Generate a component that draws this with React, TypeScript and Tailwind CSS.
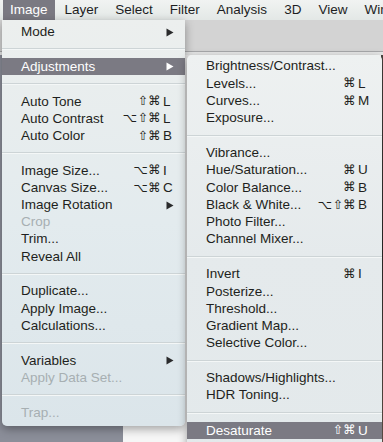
type Row =
  | "sep"
  | { label: string; mods?: string; k?: string; arrow?: boolean; off?: boolean; on?: boolean };

const MAIN: Row[] = [
  { label: "Mode", arrow: true },
  "sep",
  { label: "Adjustments", arrow: true, on: true },
  "sep",
  { label: "Auto Tone", mods: "⇧⌘", k: "L" },
  { label: "Auto Contrast", mods: "⌥⇧⌘", k: "L" },
  { label: "Auto Color", mods: "⇧⌘", k: "B" },
  "sep",
  { label: "Image Size...", mods: "⌥⌘", k: "I" },
  { label: "Canvas Size...", mods: "⌥⌘", k: "C" },
  { label: "Image Rotation", arrow: true },
  { label: "Crop", off: true },
  { label: "Trim..." },
  { label: "Reveal All" },
  "sep",
  { label: "Duplicate..." },
  { label: "Apply Image..." },
  { label: "Calculations..." },
  "sep",
  { label: "Variables", arrow: true },
  { label: "Apply Data Set...", off: true },
  "sep",
  { label: "Trap...", off: true },
];

const ADJUST: Row[] = [
  { label: "Brightness/Contrast..." },
  { label: "Levels...", mods: "⌘", k: "L" },
  { label: "Curves...", mods: "⌘", k: "M" },
  { label: "Exposure..." },
  "sep",
  { label: "Vibrance..." },
  { label: "Hue/Saturation...", mods: "⌘", k: "U" },
  { label: "Color Balance...", mods: "⌘", k: "B" },
  { label: "Black & White...", mods: "⌥⇧⌘", k: "B" },
  { label: "Photo Filter..." },
  { label: "Channel Mixer..." },
  "sep",
  { label: "Invert", mods: "⌘", k: "I" },
  { label: "Posterize..." },
  { label: "Threshold..." },
  { label: "Gradient Map..." },
  { label: "Selective Color..." },
  "sep",
  { label: "Shadows/Highlights..." },
  { label: "HDR Toning..." },
  "sep",
  { label: "Desaturate", mods: "⇧⌘", k: "U", on: true },
];

const BAR = ["Image", "Layer", "Select", "Filter", "Analysis", "3D", "View", "Window"];

function MenuRows({ rows, pr, sep }: { rows: Row[]; pr: string; sep: string }) {
  return (
    <>
      {rows.map((r, i) =>
        r === "sep" ? (
          <div key={i} className={"flex flex-col justify-center " + sep}>
            <div className="h-px bg-[#cdd4d6]" />
            <div className="h-px bg-[#f4f7f7]" />
          </div>
        ) : (
          <div
            key={i}
            className={
              "flex h-[17.2px] items-center pl-[19px] " +
              pr +
              (r.on ? " bg-[#7b7a83] text-white" : r.off ? " text-[#a7afb2]" : " text-[#1e1f20]")
            }
          >
            <span className="flex-1 whitespace-nowrap">{r.label}</span>
            {r.k && (
              <span className="flex items-center">
                <span className="font-['DejaVu_Sans'] text-[12.5px] tracking-[0.3px]">{r.mods}</span>
                <span className="ml-[2px] w-[11px]">{r.k}</span>
              </span>
            )}
            {r.arrow && (
              <svg width="8" height="9" viewBox="0 0 8 9">
                <polygon points="0.5,0.5 7.5,4.5 0.5,8.5" fill={r.on ? "#ffffff" : "#2a2b2c"} />
              </svg>
            )}
          </div>
        )
      )}
    </>
  );
}

export default function App() {
  return (
    <div className="relative flex h-[442px] w-[383px] flex-col overflow-hidden bg-[#c9cacc] font-['Liberation_Sans',sans-serif] text-[13.5px]">
      <div className="flex h-[20px] shrink-0 items-center gap-[3px] bg-gradient-to-b from-[#f1f3f2] to-[#e3e8e6] pl-[3px] text-[#1d1e1f]">
        {BAR.map((b, i) => (
          <div
            key={b}
            className={
              "flex h-full items-center whitespace-nowrap px-[7px] " +
              (i === 0 ? "bg-[#7a7982] text-white" : "")
            }
          >
            {b}
          </div>
        ))}
      </div>
      <div className="h-[32px] shrink-0 border-b border-[#a7a8aa] bg-[#d3d3d3]" />
      <div className="h-[3px] shrink-0 bg-[#e6e7e7]" />
      <div className="flex flex-1">
        <div className="w-[123px] bg-[#8b8e99]" />
        <div className="flex-1 bg-[#f6f6f6]" />
        <div className="w-[2px] bg-gradient-to-b from-[#4a4440] via-[#2d2b2a] to-[#6a5a50]" />
      </div>

      <div className="absolute left-[2px] top-[20px] w-[183px] rounded-b-[5px] bg-gradient-to-b from-[#ecefee] via-[#e3ebee] to-[#dbe5ea] pb-[5px] pt-[3.5px] shadow-[0_3px_10px_rgba(0,0,0,0.35)]">
        <MenuRows rows={MAIN} pr="pr-[11px]" sep="h-[17.6px]" />
      </div>

      <div className="absolute left-[187px] top-[55px] w-[195px] rounded-t-[5px] bg-gradient-to-b from-[#eef1f1] via-[#e5eaec] to-[#e3e9eb] pb-[20px] pt-[3px] shadow-[0_3px_10px_rgba(0,0,0,0.35)]">
        <MenuRows rows={ADJUST} pr="pr-[13px]" sep="h-[18px]" />
      </div>
    </div>
  );
}
